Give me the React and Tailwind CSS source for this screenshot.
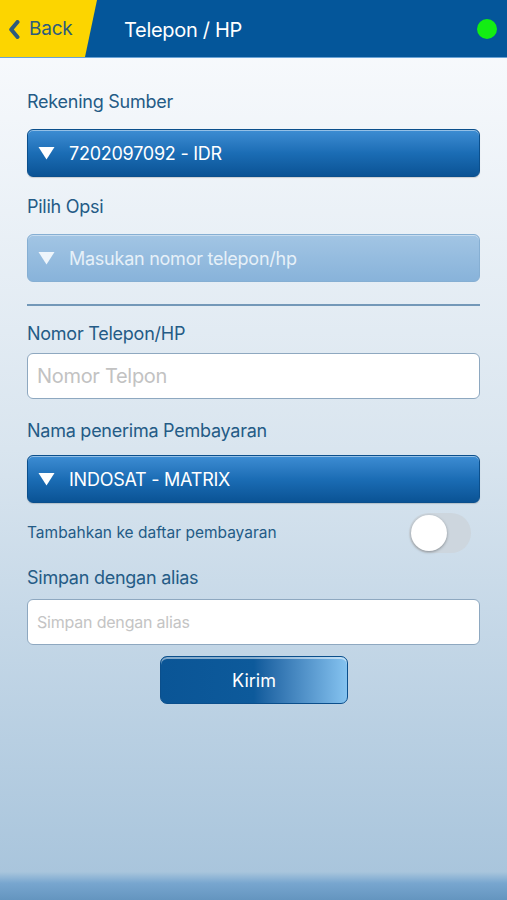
import { useState } from 'react';

function Triangle({ className = 'fill-white' }) {
  return (
    <svg width="17" height="14" viewBox="0 0 17 14" className={className}>
      <path d="M0.5 1 L16.5 1 L8.5 13.5 Z" />
    </svg>
  );
}

function Label({ children, className = '' }) {
  return (
    <div className={`text-[18px] leading-[22px] tracking-[-0.25px] text-[#245b86] ${className}`}>
      {children}
    </div>
  );
}

function Select({ value, muted }) {
  return (
    <div
      className={
        muted
          ? 'flex h-[48px] items-center gap-[14px] rounded-[6px] border border-[#86afd3] bg-gradient-to-b from-[#a2c5e4] to-[#88b3da] pl-[10px] shadow-[inset_0_1px_0_rgba(255,255,255,0.4)]'
          : 'flex h-[48px] items-center gap-[14px] rounded-[6px] border border-[#0b4f8c] bg-gradient-to-b from-[#3d8dd3] via-[#1b6db5] to-[#0a5395] pl-[10px] shadow-[inset_0_1px_0_rgba(255,255,255,0.45),0_1px_1px_rgba(0,0,0,0.15)]'
      }
    >
      <Triangle className={muted ? 'fill-[#eef5fb]' : 'fill-white'} />
      <span className={`text-[18px] tracking-[-0.25px] ${muted ? 'text-[#e6f0f8]' : 'text-white'}`}>
        {value}
      </span>
    </div>
  );
}

export default function App() {
  const [on, setOn] = useState(false);
  const [phone, setPhone] = useState('');
  const [alias, setAlias] = useState('');

  return (
    <div
      className="flex min-h-screen flex-col bg-gradient-to-b from-[#fbfcfe] via-[#d9e5ef] to-[#a6c3db]"
      style={{ fontFamily: 'Inter, "Liberation Sans", sans-serif' }}
    >
      <header className="flex h-[58px] items-center border-b border-[#6aa3d6] bg-[#04569a]">
        <button className="flex h-full w-[97px] items-center gap-[9px] bg-[#fcd500] pl-[8px] pt-[2px] [clip-path:polygon(0_0,97px_0,85px_100%,0_100%)]">
          <svg width="12" height="19" viewBox="0 0 12 19">
            <path
              d="M9.5 2 L3.2 9.5 L9.5 17"
              fill="none"
              stroke="#2d5b7d"
              strokeWidth="4"
              strokeLinejoin="round"
              strokeLinecap="round"
            />
          </svg>
          <span className="text-[19px] tracking-[-0.2px] text-[#2d5b7d]">Back</span>
        </button>
        <h1 className="ml-[27px] pt-[2px] text-[20px] tracking-[-0.3px] text-white">Telepon / HP</h1>
        <span className="ml-auto mr-[10px] h-[20px] w-[20px] rounded-full bg-[#13ee13]" />
      </header>

      <main className="flex-1 px-[27px] pt-[33px]">
        <Label>Rekening Sumber</Label>
        <div className="mt-[16px]">
          <Select value="7202097092 - IDR" />
        </div>

        <Label className="mt-[19px]">Pilih Opsi</Label>
        <div className="mt-[16px]">
          <Select value="Masukan nomor telepon/hp" muted />
        </div>

        <div className="mt-[22px] h-[2px] bg-[#7398b8]" />

        <Label className="mt-[17px]">Nomor Telepon/HP</Label>
        <input
          value={phone}
          onChange={(e) => setPhone(e.target.value)}
          placeholder="Nomor Telpon"
          className="mt-[8px] h-[46px] w-full rounded-[6px] border border-[#8ea8c0] bg-white px-[9px] text-[20px] tracking-[-0.3px] text-gray-700 placeholder:text-[#c2c2c2] focus:outline-none"
        />

        <Label className="mt-[21px]">Nama penerima Pembayaran</Label>
        <div className="mt-[13px]">
          <Select value="INDOSAT - MATRIX" />
        </div>

        <div className="mt-[10px] flex items-center justify-between">
          <span className="text-[15.5px] text-[#245b86]">Tambahkan ke daftar pembayaran</span>
          <button
            onClick={() => setOn(!on)}
            className={`mr-[9px] flex h-[40px] w-[62px] items-center rounded-full p-[2px] ${on ? 'justify-end bg-[#4cd964]' : 'justify-start bg-[#cdd6de]'}`}
          >
            <span className="h-[36px] w-[36px] rounded-full bg-white shadow-[0_1px_3px_rgba(0,0,0,0.35)]" />
          </button>
        </div>

        <Label className="mt-[14px]">Simpan dengan alias</Label>
        <input
          value={alias}
          onChange={(e) => setAlias(e.target.value)}
          placeholder="Simpan dengan alias"
          className="mt-[10px] h-[46px] w-full rounded-[6px] border border-[#8ea8c0] bg-white px-[9px] text-[16px] tracking-[-0.2px] text-gray-700 placeholder:text-[#c4c4c4] focus:outline-none"
        />

        <div className="mt-[11px] flex justify-center">
          <button className="ml-[1px] h-[48px] w-[188px] rounded-[7px] border border-[#0b4f8c] bg-gradient-to-r from-[#0a5596] via-[#0d5a9b] via-50% to-[#85c3f0] text-[18px] text-white shadow-[inset_0_2px_0_rgba(255,255,255,0.5)]">
            Kirim
          </button>
        </div>
      </main>

      <div className="h-[28px] bg-gradient-to-b from-[#a8c5dc] via-[#78a6cf] via-40% to-[#6495bf]" />
    </div>
  );
}
